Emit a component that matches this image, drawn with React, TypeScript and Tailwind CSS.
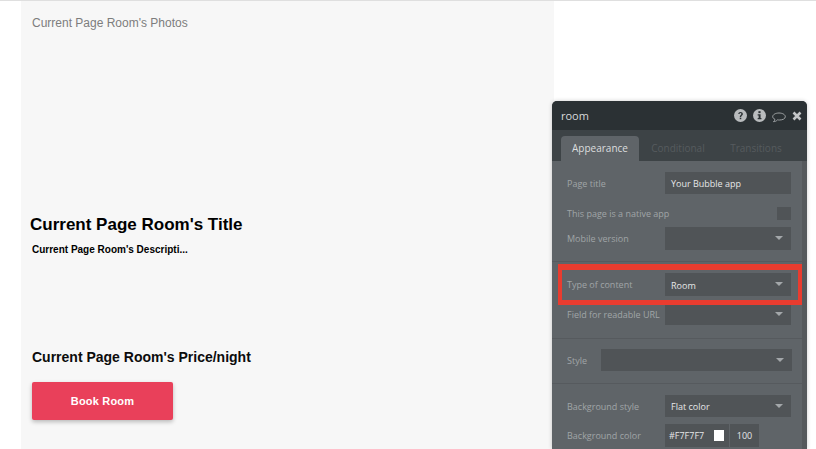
import React from 'react';

const Caret = () => (
  <svg width="8" height="4" viewBox="0 0 8 4" className="absolute right-[8px] top-[9px]">
    <path d="M0 0h8L4 4z" fill="#a3a7aa" />
  </svg>
);

const Select: React.FC<{ value?: string; className?: string }> = ({ value, className }) => (
  <div className={`relative flex items-center bg-[#505457] pl-[6px] pt-[2px] text-[9px] text-[#e6e7e8] ${className ?? 'w-[126px] h-[23px]'}`}>
    {value}
    <Caret />
  </div>
);

const Label: React.FC<{ children: React.ReactNode; className?: string }> = ({ children, className }) => (
  <span className={`whitespace-nowrap pl-px pt-px text-[9px] text-[#a0a4a7] ${className ?? 'w-[99px]'}`}>{children}</span>
);

const PropertyPanel: React.FC = () => (
  <div className="absolute left-[552px] top-[101px] h-[348px] w-[255px] overflow-hidden rounded-t-[5px] bg-[#5f6468] font-['Open_Sans',sans-serif] shadow-[0_0_4px_rgba(0,0,0,0.2)]">
    <header className="flex h-[29px] items-center justify-between bg-[#2b3134] pl-[9px] pr-[5px]">
      <span className="pt-[2px] text-[11px] text-[#d9dadb]">room</span>
      <div className="flex items-center gap-[6px]">
        <svg width="13" height="13" viewBox="0 0 12 12">
          <circle cx="6" cy="6" r="6" fill="#b9bcbe" />
          <path d="M3.900 4.600C4 3.400 4.900 2.700 6.100 2.700c1.200 0 2.100.7 2.100 1.800 0 1.500-1.600 1.500-1.600 2.800H5.300c0-1.800 1.500-1.900 1.500-2.800 0-.4-.3-.7-.8-.7-.5 0-.8.3-.9.8z" fill="#2b3134" />
          <rect x="5.300" y="8" width="1.400" height="1.400" fill="#2b3134" />
        </svg>
        <svg width="13" height="13" viewBox="0 0 12 12">
          <circle cx="6" cy="6" r="6" fill="#b9bcbe" />
          <rect x="5" y="2" width="2" height="1.800" fill="#2b3134" />
          <path d="M4.300 4.900H7v3.500h.8v1H4.300v-1h.9V5.900h-.9z" fill="#2b3134" />
        </svg>
        <svg width="14" height="12" viewBox="0 0 14 12" className="mt-[2px]">
          <path d="M7 2c3.300 0 6.300 1.500 6.300 3.700S10.500 9 7.500 9c-.7 0-1.300 0-1.900-.2C4.600 10 3 10.600 1.500 10.700c.8-.7 1.300-1.500 1.400-2.500C1.500 7.600.7 6.800.7 5.700.7 3.500 3.700 2 7 2z" fill="none" stroke="#b9bcbe" strokeWidth="0.8" />
        </svg>
        <svg width="10" height="10" viewBox="0 0 10 10">
          <path d="M1.500 1.500l7 7M8.500 1.500l-7 7" stroke="#c4c6c8" strokeWidth="2.600" />
        </svg>
      </div>
    </header>
    <nav className="flex h-[31px] items-end bg-[#3d4346] pl-[9px] text-[10px]">
      <div className="flex h-[25px] w-[78px] items-center justify-center rounded-t-[4px] bg-[#5f6468] text-[#dcdedf]">Appearance</div>
      <div className="flex h-[25px] w-[78px] items-center justify-center text-[#565b5e]">Conditional</div>
      <div className="flex h-[25px] w-[78px] items-center justify-center text-[#565b5e]">Transitions</div>
    </nav>
    <div className="flex">
      <div className="w-[250px] pl-[14px]">
        <div className="mt-[11px] flex h-[22px] items-center">
          <Label>Page title</Label>
          <div className="flex h-[22px] w-[126px] items-center bg-[#505457] pl-[6px] pt-px text-[9px] text-[#e6e7e8]">Your Bubble app</div>
        </div>
        <div className="mt-[13px] flex h-[13px] items-center justify-between pr-[11px]">
          <Label className="w-auto">This page is a native app</Label>
          <div className="h-[13px] w-[14px] bg-[#505457]" />
        </div>
        <div className="mt-[7px] flex items-center">
          <Label>Mobile version</Label>
          <Select />
        </div>
        <div className="-ml-[14px] mt-[11px] h-px bg-[#565a5e]" />
        <div className="mt-[11px] flex items-center">
          <Label>Type of content</Label>
          <Select value="Room" />
        </div>
        <div className="mt-[7px] flex items-center">
          <Label>Field for readable URL</Label>
          <Select className="h-[22px] w-[126px]" />
        </div>
        <div className="-ml-[14px] mt-[13px] h-px bg-[#565a5e]" />
        <div className="mt-[10px] flex items-center">
          <Label className="w-[35px]">Style</Label>
          <Select className="h-[22px] w-[191px]" />
        </div>
        <div className="-ml-[14px] mt-[12px] h-px bg-[#565a5e]" />
        <div className="mt-[11px] flex items-center">
          <Label>Background style</Label>
          <Select value="Flat color" className="h-[22px] w-[126px]" />
        </div>
        <div className="mt-[7px] flex items-center">
          <Label>Background color</Label>
          <div className="flex h-[23px] w-[64px] items-center justify-between bg-[#505457] pl-[4px] pr-[5px] text-[9px] text-[#e6e7e8]">
            #F7F7F7
            <div className="h-[11px] w-[10px] bg-white" />
          </div>
          <div className="ml-px flex h-[23px] w-[29px] items-center justify-center bg-[#505457] text-[9px] text-[#e6e7e8]">100</div>
        </div>
      </div>
      <div className="ml-auto h-[300px] w-[5px] bg-[#55595c]" />
    </div>
    <div className="absolute left-[6px] top-[163px] h-[41px] w-[244px] border-x-4 border-t-[6px] border-b-[5px] border-[#e93c2f]" />
  </div>
);

const App: React.FC = () => {
  return (
    <div className="relative h-[449px] w-[816px] overflow-hidden bg-white font-['Liberation_Sans',sans-serif]">
      <div className="h-px bg-[#dfdfdf]" />
      <main className="ml-[21px] h-[448px] w-[533px] bg-[#f7f7f7] pl-[11px]">
        <p className="pt-[14px] text-[12px] leading-[16px] text-[#7d7d7d]">Current Page Room's Photos</p>
        <h1 className="-ml-[2px] mt-[184px] text-[17px] font-bold leading-[20px] text-black">Current Page Room's Title</h1>
        <p className="mt-[8px] text-[10px] font-bold leading-[14px] text-black">Current Page Room's Descripti...</p>
        <h2 className="mt-[91px] text-[14px] font-bold leading-[18px] text-[#0c0c0c]">Current Page Room's Price/night</h2>
        <button className="mt-[16px] flex h-[38px] w-[141px] items-center justify-center rounded-[2px] bg-[#e9405a] text-[11px] font-bold tracking-[0.2px] text-white shadow-[0_2px_4px_rgba(0,0,0,0.25)]">
          Book Room
        </button>
      </main>
      <PropertyPanel />
    </div>
  );
};

export default App;
